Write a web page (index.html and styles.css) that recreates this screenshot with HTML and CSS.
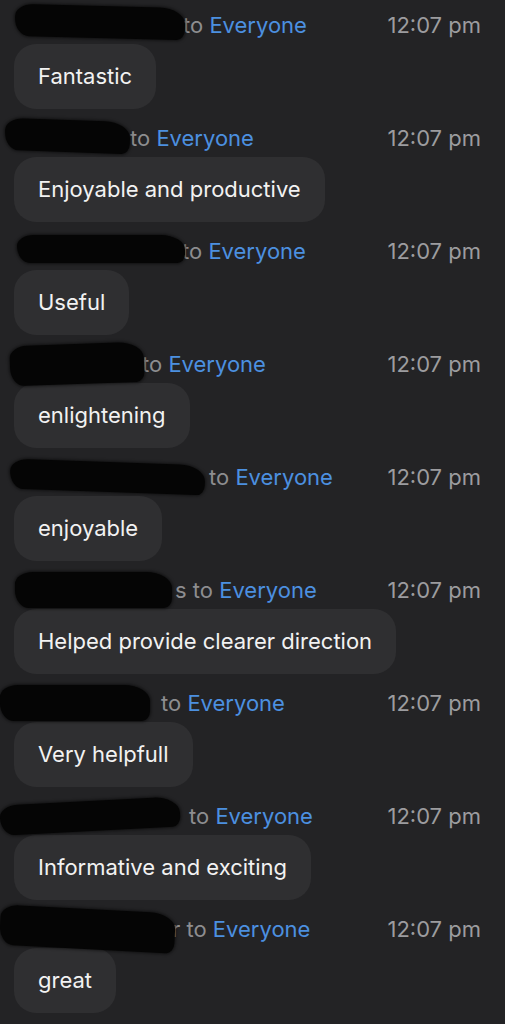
FILE: index.html
```html
<!DOCTYPE html>
<html lang="en">
<head>
  <meta charset="UTF-8">
  <meta name="viewport" content="width=device-width, initial-scale=1.0">
  <title>Chat</title>
  <link rel="stylesheet" href="styles.css">
</head>
<body>
  <div class="chat">
    <div class="msg">
      <div class="head">
        <span class="from"><span class="blot b1"></span>to <span class="to">Everyone</span></span>
        <span class="time">12:07 pm</span>
      </div>
      <div class="bubble">Fantastic</div>
    </div>
    <div class="msg">
      <div class="head">
        <span class="from"><span class="blot b2"></span>to <span class="to">Everyone</span></span>
        <span class="time">12:07 pm</span>
      </div>
      <div class="bubble">Enjoyable and productive</div>
    </div>
    <div class="msg">
      <div class="head">
        <span class="from"><span class="blot b3"></span>to <span class="to">Everyone</span></span>
        <span class="time">12:07 pm</span>
      </div>
      <div class="bubble">Useful</div>
    </div>
    <div class="msg">
      <div class="head">
        <span class="from"><span class="blot b4"></span>to <span class="to">Everyone</span></span>
        <span class="time">12:07 pm</span>
      </div>
      <div class="bubble">enlightening</div>
    </div>
    <div class="msg">
      <div class="head">
        <span class="from"><span class="blot b5"></span>to <span class="to">Everyone</span></span>
        <span class="time">12:07 pm</span>
      </div>
      <div class="bubble">enjoyable</div>
    </div>
    <div class="msg">
      <div class="head">
        <span class="from"><span class="blot b6"></span>s to <span class="to">Everyone</span></span>
        <span class="time">12:07 pm</span>
      </div>
      <div class="bubble">Helped provide clearer direction</div>
    </div>
    <div class="msg">
      <div class="head">
        <span class="from"><span class="blot b7"></span>to <span class="to">Everyone</span></span>
        <span class="time">12:07 pm</span>
      </div>
      <div class="bubble">Very helpfull</div>
    </div>
    <div class="msg">
      <div class="head">
        <span class="from"><span class="blot b8"></span>to <span class="to">Everyone</span></span>
        <span class="time">12:07 pm</span>
      </div>
      <div class="bubble">Informative and exciting</div>
    </div>
    <div class="msg">
      <div class="head">
        <span class="from"><span class="blot b9"></span>r to <span class="to">Everyone</span></span>
        <span class="time">12:07 pm</span>
      </div>
      <div class="bubble">great</div>
    </div>
  </div>
</body>
</html>
```

FILE: styles.css
```css
body {
  margin: 0;
  background: #232325;
  font-family: Inter, "Noto Sans", sans-serif;
  color: #f2f2f2;
}

.chat {
  display: flex;
  flex-direction: column;
}

.msg {
  height: 113px;
  display: flex;
  flex-direction: column;
}

.head {
  height: 44px;
  box-sizing: border-box;
  padding: 6px 24px 0 0;
  display: flex;
  align-items: center;
  justify-content: space-between;
  font-size: 22px;
  color: #8d8d90;
}

.from {
  display: flex;
  align-items: center;
  white-space: pre;
}

.to {
  color: #4c90e0;
}

.time {
  color: #9c9c9f;
}

/* redacted sender names */
.blot {
  display: inline-block;
  height: 32px;
  background: #050505;
  border-radius: 18px 26px 8px 14px / 12px 16px 10px 18px;
  position: relative;
  z-index: 1;
  box-shadow: 0 0 3px 1px rgba(5, 5, 5, 0.6);
}

.b1 { margin-left: 15px; width: 170px; margin-right: -2px; transform: translateY(-3px) rotate(1.5deg); }
.b2 { margin-left: 5px; width: 125px; margin-right: 0; transform: translateY(-2px) rotate(2deg); }
.b3 { margin-left: 17px; width: 168px; margin-right: -3px; height: 28px; transform: translateY(-2px); }
.b4 { margin-left: 10px; width: 134px; margin-right: -2px; height: 40px; transform: rotate(-2deg); }
.b5 { margin-left: 10px; width: 195px; margin-right: 4px; height: 30px; transform: rotate(2deg); }
.b6 { margin-left: 15px; width: 157px; margin-right: 3px; height: 36px; }
.b7 { margin-left: 0; width: 150px; margin-right: 11px; height: 36px; }
.b8 { margin-left: 0; width: 180px; margin-right: 9px; height: 30px; transform: rotate(-3deg); }
.b9 { margin-left: 0; width: 175px; margin-right: -3px; height: 40px; transform: rotate(3deg); }

.bubble {
  align-self: flex-start;
  margin-left: 14px;
  height: 65px;
  line-height: 65px;
  padding: 0 24px;
  border-radius: 22px;
  background: #2f2f31;
  font-size: 22px;
}
```
